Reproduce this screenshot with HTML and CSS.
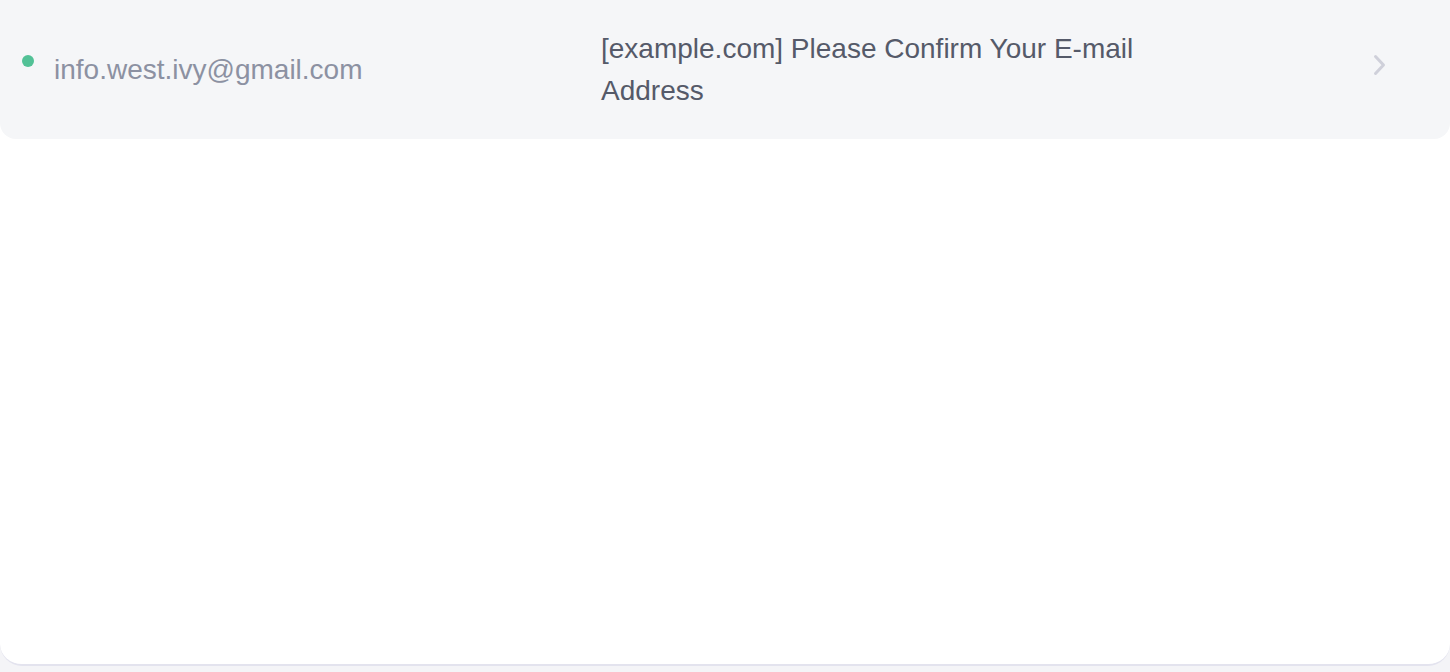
FILE: index.html
```html
<!DOCTYPE html>
<html lang="en">
<head>
<meta charset="utf-8">
<title>Inbox</title>
<link rel="stylesheet" href="styles.css">
</head>
<body>
<main class="card">
  <a class="mail-row" href="#">
    <div class="sender">
      <span class="dot"></span>
      <span class="email">info.west.ivy@gmail.com</span>
    </div>
    <div class="subject">[example.com] Please Confirm Your E-mail Address</div>
    <div class="chev">
      <svg width="13" height="22" viewBox="0 0 13 22" aria-hidden="true">
        <path d="M2.5 2.5 L10.5 11 L2.5 19.5" fill="none" stroke="#cfd0da" stroke-width="3" stroke-linecap="round" stroke-linejoin="round"/>
      </svg>
    </div>
  </a>
</main>
</body>
</html>
```
FILE: styles.css
```css
html, body {
  margin: 0;
  padding: 0;
}
body {
  background: #f4f4f7;
  font-family: "Liberation Sans", Arial, sans-serif;
  height: 672px;
  overflow: hidden;
}
.card {
  background: #ffffff;
  height: 664px;
  border-bottom: 2px solid #e3e3ee;
  border-radius: 0 0 22px 22px;
}
.mail-row {
  display: flex;
  align-items: center;
  height: 139px;
  background: #f5f6f8;
  border-radius: 0 0 16px 16px;
  text-decoration: none;
  font-size: 28px;
  line-height: 42px;
}
.sender {
  display: flex;
  align-items: flex-start;
  width: 601px;
  padding-left: 22px;
  padding-top: 1px;
  box-sizing: border-box;
  flex: none;
}
.dot {
  width: 12px;
  height: 12px;
  border-radius: 50%;
  background: #52c196;
  margin-top: 6px;
  margin-right: 20px;
  flex: none;
}
.email {
  color: #8c91a2;
}
.subject {
  width: 560px;
  flex: none;
  color: #555a69;
}
.chev {
  flex: 1;
  display: flex;
  justify-content: flex-end;
  padding-right: 64px;
  margin-bottom: 9px;
}
.chev svg {
  display: block;
}
```
